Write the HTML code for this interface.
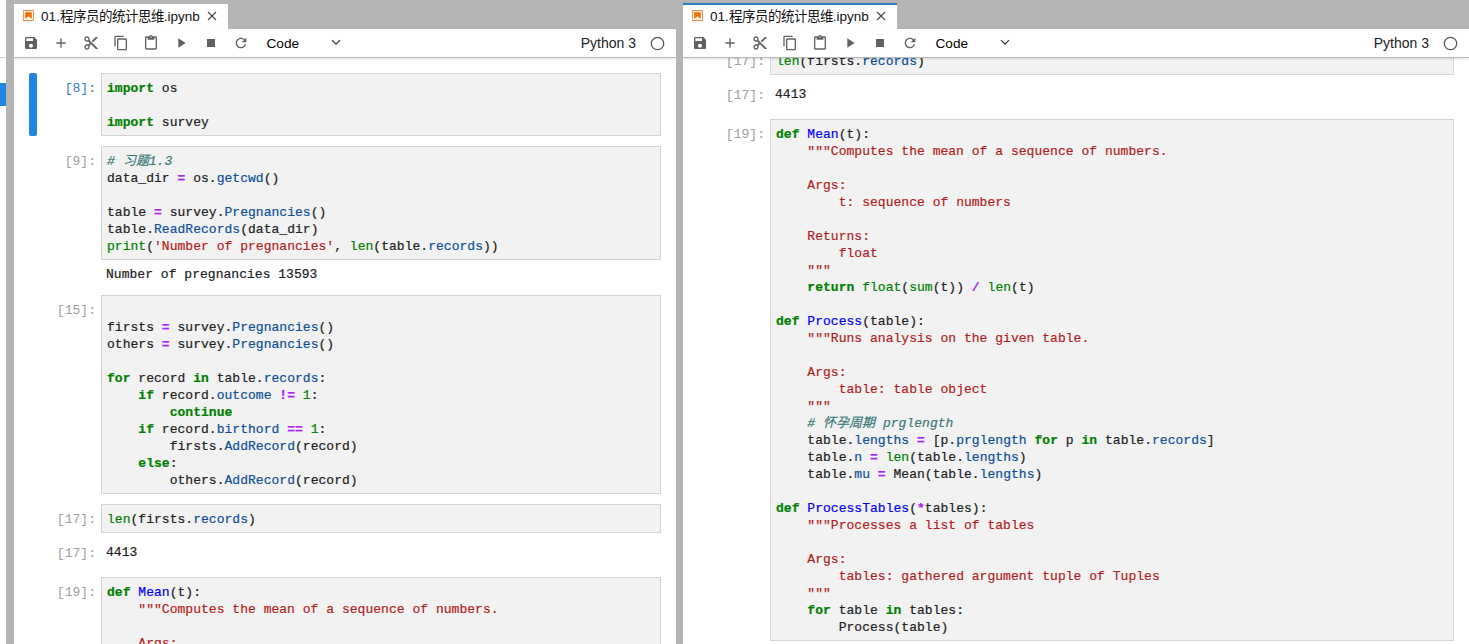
<!DOCTYPE html>
<html lang="zh-CN"><head><meta charset="utf-8"><title>JupyterLab</title><style>
*{box-sizing:border-box}
html,body{margin:0;padding:0}
body{width:1469px;height:644px;overflow:hidden;background:#b4b4b4;position:relative;font-family:"Liberation Sans",sans-serif}
.strip{position:absolute;left:0;top:0;width:6px;height:644px;background:#fff}
.strip .ln{position:absolute;left:0;top:57px;width:6px;height:1px;background:#cfcfcf}
.strip .blk{position:absolute;left:0;top:83px;width:6px;height:23px;background:#1f86e6}
.panel{position:absolute;top:0;height:644px;background:#fff;overflow:hidden}
.nb{position:absolute;left:0;right:0;top:0;height:1200px}
.tabbar{position:absolute;left:0;right:0;top:0;height:29px;background:#b4b4b4;z-index:3}
.tab{position:absolute;left:0;top:4px;width:214px;height:25px;background:#fff}
.tab.cur{top:3px;height:26px;border-top:2px solid #2f7dc2}
.nbi{position:absolute;left:8px;top:5px}
.tab.cur .nbi{top:4px}
.tt{position:absolute;left:27px;top:4.5px;font-size:13.5px;line-height:16px;color:#111;white-space:nowrap}
.tab.cur .tt{top:3.5px}
.cls{position:absolute;left:193px;top:6.5px}
.tab.cur .cls{top:5.5px}
.toolbar{position:absolute;left:0;right:0;top:29px;height:29px;background:#fff;border-bottom:1px solid #b9b9b9;box-shadow:0 1px 2px rgba(0,0,0,0.12);z-index:3}
.ic{position:absolute;top:6px;fill:#616161}
.celltype{position:absolute;left:252.5px;top:6.6px;font-size:13.6px;line-height:16px;color:#000}
.chev{position:absolute;left:317px;top:10px}
.kn{position:absolute;right:40px;top:5.5px;font-size:14px;line-height:16px;color:#222}
.kc{position:absolute;right:11px;top:6.5px}
.bar{position:absolute;left:15px;width:8px;border-radius:2px;background:#1f86e6}
.pr{position:absolute;left:0;width:82px;text-align:right;font-family:"Liberation Mono",monospace;font-size:13px;line-height:17px;color:#9e9e9e;padding-top:7px;letter-spacing:0.03px}
.pr.act{color:#307fc1}
.box{position:absolute;left:87px;right:15px;background:#f2f2f2;border:1px solid #d4d4d4}
pre{margin:0;font-family:"Liberation Mono",monospace;font-size:13px;line-height:17px;color:#212121;letter-spacing:0.03px;-webkit-text-stroke:0.2px}
.box pre{padding:6px 0 0 5px}
.out{position:absolute;left:92px;padding-top:6px}
.k{color:#008000;font-weight:bold}
.bi{color:#008000}
.df{color:#0000ff}
.p{color:#0d4f98}
.o{color:#aa22ff;font-weight:bold}
.n{color:#008800}
.s{color:#b21e1e}
.c{color:#3b7878;font-style:italic}
</style></head>
<body>
<div class="strip"><div class="ln"></div><div class="blk"></div></div>
<div class="panel" style="left:14px;width:662px">
<div class="tabbar"><div class="tab"><svg class="nbi" width="13" height="13" viewBox="0 0 22 22"><path fill="#fdf1e0" d="M2.5 2.5h17v17h-17z"/><path fill="#ea8a52" d="M18.7 3.3v15.4H3.3V3.3h15.4m1.5-1.5H1.8v18.3h18.3l.1-18.3z"/><path fill="#EF6C00" d="M16.5 16.5l-5.4-4.3-5.6 4.3v-11h11z"/></svg><span class="tt">01.程序员的统计思维.ipynb</span><svg class="cls" width="10" height="10" viewBox="0 0 10 10"><path d="M1 1L9 9M9 1L1 9" stroke="#444" stroke-width="1.1"/></svg></div></div><div class="toolbar"><svg class="ic" style="left:9px" width="16" height="16" viewBox="0 0 24 24"><path d="M17 3H5c-1.11 0-2 .9-2 2v14c0 1.1.89 2 2 2h14c1.1 0 2-.9 2-2V7l-4-4zm-5 16c-1.66 0-3-1.34-3-3s1.34-3 3-3 3 1.34 3 3-1.34 3-3 3zm3-10H5V5h10v4z"/></svg><svg class="ic" style="left:39px" width="16" height="16" viewBox="0 0 24 24"><path d="M19 13h-6v6h-2v-6H5v-2h6V5h2v6h6v2z"/></svg><svg class="ic" style="left:69px" width="16" height="16" viewBox="0 0 24 24"><path d="M9.64 7.64c.23-.5.36-1.05.36-1.64 0-2.21-1.79-4-4-4S2 3.79 2 6s1.79 4 4 4c.59 0 1.14-.13 1.64-.36L10 12l-2.36 2.36C7.14 14.13 6.59 14 6 14c-2.21 0-4 1.79-4 4s1.79 4 4 4 4-1.79 4-4c0-.59-.13-1.14-.36-1.64L12 14l7 7h3v-1L9.64 7.64zM6 8c-1.1 0-2-.89-2-2s.9-2 2-2 2 .89 2 2-.9 2-2 2zm0 12c-1.1 0-2-.89-2-2s.9-2 2-2 2 .89 2 2-.9 2-2 2zm6-7.5c-.28 0-.5-.22-.5-.5s.22-.5.5-.5.5.22.5.5-.22.5-.5.5zM19 3l-6 6 2 2 7-7V3z"/></svg><svg class="ic" style="left:99px" width="16" height="16" viewBox="0 0 24 24"><path d="M16 1H4c-1.1 0-2 .9-2 2v14h2V3h12V1zm3 4H8c-1.1 0-2 .9-2 2v14c0 1.1.9 2 2 2h11c1.1 0 2-.9 2-2V7c0-1.1-.9-2-2-2zm0 16H8V7h11v14z"/></svg><svg class="ic" style="left:129px" width="16" height="16" viewBox="0 0 24 24"><path d="M19 2h-4.18C14.4.84 13.3 0 12 0c-1.3 0-2.4.84-2.82 2H5c-1.1 0-2 .9-2 2v16c0 1.1.9 2 2 2h14c1.1 0 2-.9 2-2V4c0-1.1-.9-2-2-2zm-7 0c.55 0 1 .45 1 1s-.45 1-1 1-1-.45-1-1 .45-1 1-1zm7 18H5V4h2v3h10V4h2v16z"/></svg><svg class="ic" style="left:159px" width="16" height="16" viewBox="0 0 24 24"><path d="M8 5v14l11-7z"/></svg><svg class="ic" style="left:189px" width="16" height="16" viewBox="0 0 24 24"><path d="M6 6h12v12H6z"/></svg><svg class="ic" style="left:219px" width="16" height="16" viewBox="0 0 24 24"><path d="M17.65 6.35C16.2 4.9 14.21 4 12 4c-4.42 0-7.99 3.58-7.99 8s3.57 8 7.99 8c3.73 0 6.84-2.55 7.73-6h-2.08c-.82 2.33-3.04 4-5.65 4-3.31 0-6-2.69-6-6s2.69-6 6-6c1.66 0 3.14.69 4.22 1.78L13 11h7V4l-2.35 2.35z"/></svg><span class="celltype">Code</span><svg class="chev" width="10" height="7" viewBox="0 0 10 7"><path d="M1 1.2L5 5.2L9 1.2" fill="none" stroke="#333" stroke-width="1.2"/></svg><span class="kn">Python 3</span><svg class="kc" width="15" height="15" viewBox="0 0 15 15"><circle cx="7.5" cy="7.5" r="6.2" fill="none" stroke="#555" stroke-width="1.3"/></svg></div>
<div class="nb" style="top:0"><div class="bar" style="top:73px;height:63px"></div><div class="pr act" style="top:73px">[8]:</div><div class="box" style="top:73px;height:63px"><pre><b class="k">import</b> os
 
<b class="k">import</b> survey</pre></div><div class="pr" style="top:146px">[9]:</div><div class="box" style="top:146px;height:114px"><pre><i class="c"># 习题1.3</i>
data_dir <b class="o">=</b> os.<span class="p">getcwd</span>()
 
table <b class="o">=</b> survey.<span class="p">Pregnancies</span>()
table.<span class="p">ReadRecords</span>(data_dir)
<span class="bi">print</span>(<span class="s">&#x27;Number of pregnancies&#x27;</span>, <span class="bi">len</span>(table.<span class="p">records</span>))</pre></div><pre class="out" style="top:260px">Number of pregnancies 13593</pre><div class="pr" style="top:295px">[15]:</div><div class="box" style="top:295px;height:199px"><pre> 
firsts <b class="o">=</b> survey.<span class="p">Pregnancies</span>()
others <b class="o">=</b> survey.<span class="p">Pregnancies</span>()
 
<b class="k">for</b> record <b class="k">in</b> table.<span class="p">records</span>:
    <b class="k">if</b> record.<span class="p">outcome</span> <b class="o">!=</b> <span class="n">1</span>:
        <b class="k">continue</b>
    <b class="k">if</b> record.<span class="p">birthord</span> <b class="o">==</b> <span class="n">1</span>:
        firsts.<span class="p">AddRecord</span>(record)
    <b class="k">else</b>:
        others.<span class="p">AddRecord</span>(record)</pre></div><div class="pr" style="top:504px">[17]:</div><div class="box" style="top:504px;height:29px"><pre><span class="bi">len</span>(firsts.<span class="p">records</span>)</pre></div><div class="pr" style="top:538px">[17]:</div><pre class="out" style="top:538px">4413</pre><div class="pr" style="top:577px">[19]:</div><div class="box" style="top:577px;height:522px"><pre><b class="k">def</b> <span class="df">Mean</span>(t):
    <span class="s">&quot;&quot;&quot;Computes the mean of a sequence of numbers.</span>
 
    <span class="s">Args:</span>
        <span class="s">t: sequence of numbers</span>
 
    <span class="s">Returns:</span>
        <span class="s">float</span>
    <span class="s">&quot;&quot;&quot;</span>
    <b class="k">return</b> <span class="bi">float</span>(<span class="bi">sum</span>(t)) <b class="o">/</b> <span class="bi">len</span>(t)
 
<b class="k">def</b> <span class="df">Process</span>(table):
    <span class="s">&quot;&quot;&quot;Runs analysis on the given table.</span>
 
    <span class="s">Args:</span>
        <span class="s">table: table object</span>
    <span class="s">&quot;&quot;&quot;</span>
    <i class="c"># 怀孕周期 prglength</i>
    table.<span class="p">lengths</span> <b class="o">=</b> [p.<span class="p">prglength</span> <b class="k">for</b> p <b class="k">in</b> table.<span class="p">records</span>]
    table.<span class="p">n</span> <b class="o">=</b> <span class="bi">len</span>(table.<span class="p">lengths</span>)
    table.<span class="p">mu</span> <b class="o">=</b> Mean(table.<span class="p">lengths</span>)
 
<b class="k">def</b> <span class="df">ProcessTables</span>(<b class="o">*</b>tables):
    <span class="s">&quot;&quot;&quot;Processes a list of tables</span>
 
    <span class="s">Args:</span>
        <span class="s">tables: gathered argument tuple of Tuples</span>
    <span class="s">&quot;&quot;&quot;</span>
    <b class="k">for</b> table <b class="k">in</b> tables:
        Process(table)</pre></div></div>
</div>
<div class="panel" style="left:683px;width:786px">
<div class="tabbar"><div class="tab cur"><svg class="nbi" width="13" height="13" viewBox="0 0 22 22"><path fill="#fdf1e0" d="M2.5 2.5h17v17h-17z"/><path fill="#ea8a52" d="M18.7 3.3v15.4H3.3V3.3h15.4m1.5-1.5H1.8v18.3h18.3l.1-18.3z"/><path fill="#EF6C00" d="M16.5 16.5l-5.4-4.3-5.6 4.3v-11h11z"/></svg><span class="tt">01.程序员的统计思维.ipynb</span><svg class="cls" width="10" height="10" viewBox="0 0 10 10"><path d="M1 1L9 9M9 1L1 9" stroke="#444" stroke-width="1.1"/></svg></div></div><div class="toolbar"><svg class="ic" style="left:9px" width="16" height="16" viewBox="0 0 24 24"><path d="M17 3H5c-1.11 0-2 .9-2 2v14c0 1.1.89 2 2 2h14c1.1 0 2-.9 2-2V7l-4-4zm-5 16c-1.66 0-3-1.34-3-3s1.34-3 3-3 3 1.34 3 3-1.34 3-3 3zm3-10H5V5h10v4z"/></svg><svg class="ic" style="left:39px" width="16" height="16" viewBox="0 0 24 24"><path d="M19 13h-6v6h-2v-6H5v-2h6V5h2v6h6v2z"/></svg><svg class="ic" style="left:69px" width="16" height="16" viewBox="0 0 24 24"><path d="M9.64 7.64c.23-.5.36-1.05.36-1.64 0-2.21-1.79-4-4-4S2 3.79 2 6s1.79 4 4 4c.59 0 1.14-.13 1.64-.36L10 12l-2.36 2.36C7.14 14.13 6.59 14 6 14c-2.21 0-4 1.79-4 4s1.79 4 4 4 4-1.79 4-4c0-.59-.13-1.14-.36-1.64L12 14l7 7h3v-1L9.64 7.64zM6 8c-1.1 0-2-.89-2-2s.9-2 2-2 2 .89 2 2-.9 2-2 2zm0 12c-1.1 0-2-.89-2-2s.9-2 2-2 2 .89 2 2-.9 2-2 2zm6-7.5c-.28 0-.5-.22-.5-.5s.22-.5.5-.5.5.22.5.5-.22.5-.5.5zM19 3l-6 6 2 2 7-7V3z"/></svg><svg class="ic" style="left:99px" width="16" height="16" viewBox="0 0 24 24"><path d="M16 1H4c-1.1 0-2 .9-2 2v14h2V3h12V1zm3 4H8c-1.1 0-2 .9-2 2v14c0 1.1.9 2 2 2h11c1.1 0 2-.9 2-2V7c0-1.1-.9-2-2-2zm0 16H8V7h11v14z"/></svg><svg class="ic" style="left:129px" width="16" height="16" viewBox="0 0 24 24"><path d="M19 2h-4.18C14.4.84 13.3 0 12 0c-1.3 0-2.4.84-2.82 2H5c-1.1 0-2 .9-2 2v16c0 1.1.9 2 2 2h14c1.1 0 2-.9 2-2V4c0-1.1-.9-2-2-2zm-7 0c.55 0 1 .45 1 1s-.45 1-1 1-1-.45-1-1 .45-1 1-1zm7 18H5V4h2v3h10V4h2v16z"/></svg><svg class="ic" style="left:159px" width="16" height="16" viewBox="0 0 24 24"><path d="M8 5v14l11-7z"/></svg><svg class="ic" style="left:189px" width="16" height="16" viewBox="0 0 24 24"><path d="M6 6h12v12H6z"/></svg><svg class="ic" style="left:219px" width="16" height="16" viewBox="0 0 24 24"><path d="M17.65 6.35C16.2 4.9 14.21 4 12 4c-4.42 0-7.99 3.58-7.99 8s3.57 8 7.99 8c3.73 0 6.84-2.55 7.73-6h-2.08c-.82 2.33-3.04 4-5.65 4-3.31 0-6-2.69-6-6s2.69-6 6-6c1.66 0 3.14.69 4.22 1.78L13 11h7V4l-2.35 2.35z"/></svg><span class="celltype">Code</span><svg class="chev" width="10" height="7" viewBox="0 0 10 7"><path d="M1 1.2L5 5.2L9 1.2" fill="none" stroke="#333" stroke-width="1.2"/></svg><span class="kn">Python 3</span><svg class="kc" width="15" height="15" viewBox="0 0 15 15"><circle cx="7.5" cy="7.5" r="6.2" fill="none" stroke="#555" stroke-width="1.3"/></svg></div>
<div class="nb" style="top:-458px"><div class="pr" style="top:73px">[8]:</div><div class="box" style="top:73px;height:63px"><pre><b class="k">import</b> os
 
<b class="k">import</b> survey</pre></div><div class="pr" style="top:146px">[9]:</div><div class="box" style="top:146px;height:114px"><pre><i class="c"># 习题1.3</i>
data_dir <b class="o">=</b> os.<span class="p">getcwd</span>()
 
table <b class="o">=</b> survey.<span class="p">Pregnancies</span>()
table.<span class="p">ReadRecords</span>(data_dir)
<span class="bi">print</span>(<span class="s">&#x27;Number of pregnancies&#x27;</span>, <span class="bi">len</span>(table.<span class="p">records</span>))</pre></div><pre class="out" style="top:260px">Number of pregnancies 13593</pre><div class="pr" style="top:295px">[15]:</div><div class="box" style="top:295px;height:199px"><pre> 
firsts <b class="o">=</b> survey.<span class="p">Pregnancies</span>()
others <b class="o">=</b> survey.<span class="p">Pregnancies</span>()
 
<b class="k">for</b> record <b class="k">in</b> table.<span class="p">records</span>:
    <b class="k">if</b> record.<span class="p">outcome</span> <b class="o">!=</b> <span class="n">1</span>:
        <b class="k">continue</b>
    <b class="k">if</b> record.<span class="p">birthord</span> <b class="o">==</b> <span class="n">1</span>:
        firsts.<span class="p">AddRecord</span>(record)
    <b class="k">else</b>:
        others.<span class="p">AddRecord</span>(record)</pre></div><div class="pr" style="top:504px">[17]:</div><div class="box" style="top:504px;height:29px"><pre><span class="bi">len</span>(firsts.<span class="p">records</span>)</pre></div><div class="pr" style="top:538px">[17]:</div><pre class="out" style="top:538px">4413</pre><div class="pr" style="top:577px">[19]:</div><div class="box" style="top:577px;height:522px"><pre><b class="k">def</b> <span class="df">Mean</span>(t):
    <span class="s">&quot;&quot;&quot;Computes the mean of a sequence of numbers.</span>
 
    <span class="s">Args:</span>
        <span class="s">t: sequence of numbers</span>
 
    <span class="s">Returns:</span>
        <span class="s">float</span>
    <span class="s">&quot;&quot;&quot;</span>
    <b class="k">return</b> <span class="bi">float</span>(<span class="bi">sum</span>(t)) <b class="o">/</b> <span class="bi">len</span>(t)
 
<b class="k">def</b> <span class="df">Process</span>(table):
    <span class="s">&quot;&quot;&quot;Runs analysis on the given table.</span>
 
    <span class="s">Args:</span>
        <span class="s">table: table object</span>
    <span class="s">&quot;&quot;&quot;</span>
    <i class="c"># 怀孕周期 prglength</i>
    table.<span class="p">lengths</span> <b class="o">=</b> [p.<span class="p">prglength</span> <b class="k">for</b> p <b class="k">in</b> table.<span class="p">records</span>]
    table.<span class="p">n</span> <b class="o">=</b> <span class="bi">len</span>(table.<span class="p">lengths</span>)
    table.<span class="p">mu</span> <b class="o">=</b> Mean(table.<span class="p">lengths</span>)
 
<b class="k">def</b> <span class="df">ProcessTables</span>(<b class="o">*</b>tables):
    <span class="s">&quot;&quot;&quot;Processes a list of tables</span>
 
    <span class="s">Args:</span>
        <span class="s">tables: gathered argument tuple of Tuples</span>
    <span class="s">&quot;&quot;&quot;</span>
    <b class="k">for</b> table <b class="k">in</b> tables:
        Process(table)</pre></div></div>
</div>
</body></html>
